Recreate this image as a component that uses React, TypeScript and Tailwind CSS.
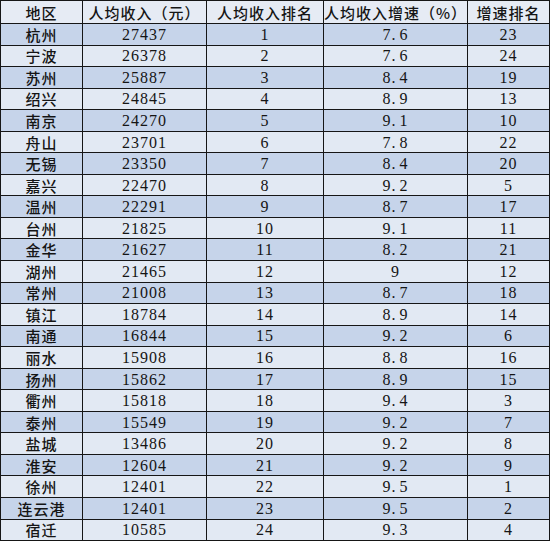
const rows: [string, number, number, string, number][] = [
  ["杭州", 27437, 1, "7.6", 23],
  ["宁波", 26378, 2, "7.6", 24],
  ["苏州", 25887, 3, "8.4", 19],
  ["绍兴", 24845, 4, "8.9", 13],
  ["南京", 24270, 5, "9.1", 10],
  ["舟山", 23701, 6, "7.8", 22],
  ["无锡", 23350, 7, "8.4", 20],
  ["嘉兴", 22470, 8, "9.2", 5],
  ["温州", 22291, 9, "8.7", 17],
  ["台州", 21825, 10, "9.1", 11],
  ["金华", 21627, 11, "8.2", 21],
  ["湖州", 21465, 12, "9", 12],
  ["常州", 21008, 13, "8.7", 18],
  ["镇江", 18784, 14, "8.9", 14],
  ["南通", 16844, 15, "9.2", 6],
  ["丽水", 15908, 16, "8.8", 16],
  ["扬州", 15862, 17, "8.9", 15],
  ["衢州", 15818, 18, "9.4", 3],
  ["泰州", 15549, 19, "9.2", 7],
  ["盐城", 13486, 20, "9.2", 8],
  ["淮安", 12604, 21, "9.2", 9],
  ["徐州", 12401, 22, "9.5", 1],
  ["连云港", 12401, 23, "9.5", 2],
  ["宿迁", 10585, 24, "9.3", 4],
];

const headers = ["地区", "人均收入（元）", "人均收入排名", "人均收入增速（%）", "增速排名"];

// growth rate: period sits a bit wide, like the original sheet font
function Rate({ value }: { value: string }) {
  const [a, b] = value.split(".");
  if (b === undefined) return <>{a}</>;
  return (
    <>
      {a}
      <span className="mr-[3px]">.</span>
      {b}
    </>
  );
}

export default function App() {
  const cell = "border border-[#161616] text-center p-0";
  const num = "font-['Liberation_Serif','Noto_Sans_CJK_SC',serif] text-[16px] tracking-[1px] pt-[1px]";

  return (
    <div className="w-[550px] h-[542px] bg-white">
      <table className="table-fixed border-collapse w-[549px] text-[#151515] font-['Noto_Sans_CJK_SC',sans-serif] leading-none">
        <colgroup>
          <col className="w-[82px]" />
          <col className="w-[124px]" />
          <col className="w-[117px]" />
          <col className="w-[144px]" />
          <col className="w-[82px]" />
        </colgroup>
        <thead>
          <tr className="h-[23px] bg-[#e6ebf4]">
            {headers.map((h) => (
              <th key={h} className={`${cell} text-[15px] font-medium tracking-[1px]`}>
                {h}
              </th>
            ))}
          </tr>
        </thead>
        <tbody>
          {rows.map((r, idx) => (
            <tr
              key={r[0]}
              className={`h-[21.55px] ${idx % 2 === 0 ? "bg-[#c6d4ea]" : "bg-[#e2e9f3]"}`}
            >
              <td className={`${cell} text-[15px] font-medium tracking-[1px]`}>{r[0]}</td>
              <td className={`${cell} ${num}`}>{r[1]}</td>
              <td className={`${cell} ${num}`}>{r[2]}</td>
              <td className={`${cell} ${num}`}>
                <Rate value={r[3]} />
              </td>
              <td className={`${cell} ${num}`}>{r[4]}</td>
            </tr>
          ))}
        </tbody>
      </table>
    </div>
  );
}
